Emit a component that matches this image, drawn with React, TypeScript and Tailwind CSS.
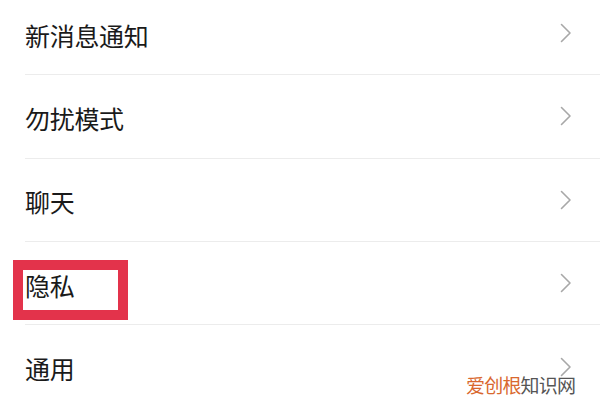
import React from 'react';

const ITEMS = ['新消息通知', '勿扰模式', '聊天', '隐私', '通用'];

const Chevron = () => (
  <svg width="12" height="20" viewBox="0 0 12 20" fill="none" className="shrink-0">
    <path d="M1.5 1.5 L10 10 L1.5 18.5" stroke="#a8a8a8" strokeWidth="1.6" strokeLinecap="round" strokeLinejoin="round" />
  </svg>
);

const App: React.FC = () => {
  return (
    <div
      className="relative w-[600px] h-[405px] overflow-hidden bg-white"
      style={{ fontFamily: '"Noto Sans CJK SC", "Noto Sans", sans-serif' }}
    >
      <ul className="-mt-[8px]">
        {ITEMS.map((label, i) => (
          <li key={label} className="relative pl-[25px]">
            <div
              className={
                'flex h-[83.3px] items-center justify-between pr-[28px] ' +
                (i < ITEMS.length - 1 ? 'border-b border-[#ececec]' : '')
              }
            >
              <span className="text-[25px] leading-none tracking-[-0.3px] text-[#1a1a1a] pt-[4px]">{label}</span>
              <Chevron />
            </div>
            {label === '隐私' && (
              <div className="absolute left-[13px] top-[18px] w-[115px] h-[60px] border-[10px] border-[#e3334b]" />
            )}
          </li>
        ))}
      </ul>

      {/* site watermark */}
      <div className="absolute left-[466px] top-[375px] text-[19px] leading-none tracking-[-0.8px]">
        <span className="text-[#d9682f]">爱创根</span>
        <span className="text-[#555555]">知识网</span>
      </div>
    </div>
  );
};

export default App;
